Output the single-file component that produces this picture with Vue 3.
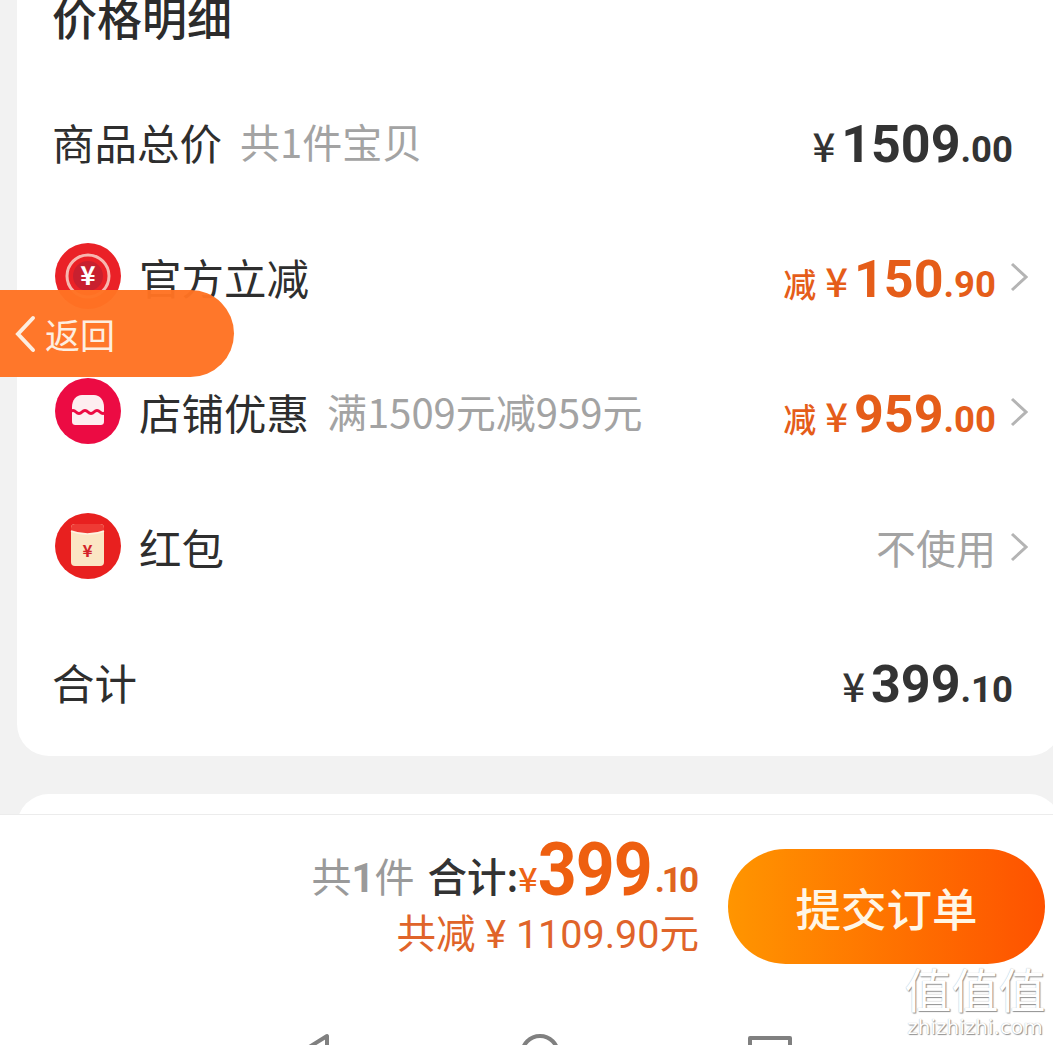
<script setup>
const rows = [
  { id: 'official', icon: 'coin', label: '官方立减', prefix: '减', big: '150', small: '.90' },
  { id: 'shop', icon: 'shop', label: '店铺优惠', note: '满1509元减959元', prefix: '减', big: '959', small: '.00' },
  { id: 'packet', icon: 'packet', label: '红包', plain: '不使用' }
]
</script>

<template>
  <div class="page">
    <div class="card">
      <div class="title">价格明细</div>
      <div class="row">
        <div class="left">
          <span class="label">商品总价</span>
          <span class="note">共1件宝贝</span>
        </div>
        <div class="price">
          <span class="yen">¥</span><span class="big">1509</span><span class="small">.00</span>
        </div>
      </div>

      <div v-for="row in rows" :key="row.id" class="row row-link">
        <div class="left">
          <svg v-if="row.icon === 'coin'" class="icon" viewBox="0 0 66 66">
            <circle cx="33" cy="33" r="33" fill="#ea2127" />
            <circle cx="33" cy="33" r="21" fill="none" stroke="#f7b7b0" stroke-width="3" />
            <circle cx="33" cy="33" r="15" fill="#c8202f" />
            <text x="33" y="42" class="icon-yen" font-size="26" fill="#fff">¥</text>
          </svg>
          <svg v-else-if="row.icon === 'shop'" class="icon" viewBox="0 0 66 66">
            <circle cx="33" cy="33" r="33" fill="#ec0b43" />
            <path d="M17 29c0-7 4-12 10-12h12c6 0 10 5 10 12v14c0 3-1 4-4 4H21c-3 0-4-1-4-4z" fill="#fdeef0" />
            <path d="M15 34q3-3 6 0t6 0 6 0 6 0 6 0 6 0" fill="none" stroke="#ec0b43" stroke-width="3" />
          </svg>
          <svg v-else class="icon" viewBox="0 0 66 66">
            <circle cx="33" cy="33" r="33" fill="#e8201f" />
            <rect x="16" y="11" width="33" height="42" rx="4" fill="#fbe6c4" />
            <path d="M16 15c0-3 2-4 4-4h25c2 0 4 1 4 4v3c-10 4-23 4-33 0z" fill="#ee3a34" />
            <path d="M16 18c10 4 23 4 33 0" fill="none" stroke="#fff3e2" stroke-width="1.500" />
            <text x="32.500" y="44" class="icon-yen" font-size="17" fill="#d3232a">¥</text>
          </svg>
          <span class="label">{{ row.label }}</span>
          <span v-if="row.note" class="note">{{ row.note }}</span>
        </div>
        <div class="right">
          <span v-if="row.plain" class="plain">{{ row.plain }}</span>
          <div v-else class="price orange">
            <span class="prefix">{{ row.prefix }}</span><span class="yen">¥</span><span class="big">{{ row.big }}</span><span class="small">{{ row.small }}</span>
          </div>
          <svg class="chevron" viewBox="0 0 18 30">
            <path d="M2 2l14 13L2 28" fill="none" stroke="#b4b4b4" stroke-width="3" />
          </svg>
        </div>
      </div>

      <div class="row">
        <div class="left"><span class="label">合计</span></div>
        <div class="price">
          <span class="yen">¥</span><span class="big">399</span><span class="small">.10</span>
        </div>
      </div>
    </div>

    <div class="next-card"></div>

    <div class="bar">
      <div class="summary">
        <div class="line-one">
          <span class="count">共<b>1</b>件</span>
          <span class="total">合计:</span>
          <span class="bar-yen">¥</span><span class="bar-big">399</span><span class="bar-small">.10</span>
        </div>
        <div class="line-two">共减 ¥ 1109.90元</div>
      </div>
      <button class="submit">提交订单</button>
    </div>

    <div class="nav">
      <svg width="33" height="13" viewBox="0 0 33 13"><path d="M-2 22L27 4V22" fill="none" stroke="#808080" stroke-width="4" stroke-linejoin="round" /></svg>
      <svg width="46" height="13" viewBox="0 0 46 13"><circle cx="23" cy="22" r="18" fill="none" stroke="#808080" stroke-width="4" /></svg>
      <svg width="46" height="13" viewBox="0 0 46 13"><path d="M3 22V6h40v16" fill="none" stroke="#808080" stroke-width="4" stroke-linejoin="round" /></svg>
    </div>

    <div class="back">
      <svg class="back-arrow" viewBox="0 0 24 38">
        <path d="M20 3L5 19l15 16" fill="none" stroke="#fdeee0" stroke-width="4" stroke-linecap="round" />
      </svg>
      <span>返回</span>
    </div>

    <div class="watermark">
      <div class="mark-glyph">值值值</div>
      <div class="mark-site">zhizhizhi.com</div>
    </div>
  </div>
</template>

<style>
html, body {
  margin: 0;
  background: #f2f2f2;
}
</style>

<style scoped>
.page {
  position: relative;
  width: 1053px;
  height: 1045px;
  overflow: hidden;
  background: #f2f2f2;
  font-family: "Liberation Sans", "Noto Sans CJK SC", sans-serif;
  color: #333;
}

.card {
  margin: 0 -8px 0 17px;
  padding: 0 33px 0 35px;
  height: 756px;
  box-sizing: border-box;
  background: #fff;
  border-radius: 0 0 32px 32px;
}

.title {
  height: 77px;
  font-family: "Noto Sans CJK SC", sans-serif;
  font-size: 45px;
  font-weight: 500;
  line-height: 34px;
  color: #2c2c2c;
}

.row {
  height: 135px;
  display: flex;
  align-items: center;
  justify-content: space-between;
  padding-right: 15px;
}

.row-link {
  padding-right: 0;
}

.left {
  display: flex;
  align-items: center;
  margin-top: -7px;
}

.right {
  display: flex;
  align-items: center;
}

.icon {
  width: 66px;
  height: 66px;
  margin: 0 18px 0 3px;
}

.icon-yen {
  font-family: "Noto Sans CJK SC", sans-serif;
  font-weight: 700;
  text-anchor: middle;
}

.label {
  font-family: "Noto Sans CJK SC", sans-serif;
  font-size: 42.500px;
  color: #2e2e2e;
}

.note {
  margin-left: 18px;
  font-family: "Noto Sans CJK SC", sans-serif;
  font-size: 40px;
  color: #a3a3a3;
}

.price {
  display: flex;
  align-items: baseline;
  font-family: Roboto, "Noto Sans CJK SC", sans-serif;
  font-weight: 700;
  color: #333;
}

.price .yen {
  font-family: "Noto Sans CJK SC", sans-serif;
  font-weight: 500;
  font-size: 40px;
  margin-right: 6px;
}

.big {
  font-size: 52px;
}

.small {
  font-size: 36.500px;
}

.orange {
  color: #e55d19;
  margin-right: 14px;
}

.prefix {
  font-family: "Noto Sans CJK SC", sans-serif;
  font-weight: 500;
  font-size: 33px;
  margin-right: 9px;
}

.plain {
  margin: -6px 14px 0 0;
  font-family: "Noto Sans CJK SC", sans-serif;
  font-size: 40px;
  color: #a3a3a3;
}

.chevron {
  width: 18px;
  height: 30px;
  margin-top: -6px;
}

.next-card {
  height: 60px;
  margin: 38px -8px -40px 17px;
  background: #fff;
  border-radius: 32px 32px 0 0;
}

.bar {
  position: relative;
  height: 200px;
  padding: 24px 8px 0 0;
  box-sizing: border-box;
  display: flex;
  justify-content: flex-end;
  gap: 29px;
  background: #fff;
  border-top: 1px solid #ececec;
}

.summary {
  display: flex;
  flex-direction: column;
  align-items: flex-end;
}

.line-one {
  display: flex;
  align-items: baseline;
  height: 62px;
  line-height: 56px;
  font-family: "Noto Sans CJK SC", sans-serif;
  margin-top: 2px;
}

.count {
  font-size: 40px;
  color: #9a9a9a;
}

.count b {
  font-family: Roboto, sans-serif;
}

.total {
  margin-left: 13px;
  font-size: 39.500px;
  font-weight: 500;
  color: #333;
}

.bar-yen {
  font-size: 34px;
  font-weight: 500;
  color: #ee6416;
}

.bar-big {
  font-family: Roboto, sans-serif;
  font-size: 68px;
  font-weight: 700;
  letter-spacing: -1px;
  color: #ee5f10;
  transform: translateY(3px) scaleY(1.08);
  transform-origin: 50% 80%;
}

.bar-small {
  margin-left: 3px;
  font-family: Roboto, sans-serif;
  font-size: 35px;
  font-weight: 700;
  letter-spacing: -3px;
  padding-right: 3px;
  color: #e0641f;
}

.line-two {
  margin-top: 10px;
  font-family: Roboto, "Noto Sans CJK SC", sans-serif;
  font-size: 39.500px;
  line-height: 44px;
  color: #e0642a;
}

.submit {
  width: 317px;
  height: 115px;
  margin-top: 10px;
  padding: 0;
  border: 0;
  border-radius: 58px;
  background: linear-gradient(90deg, #ff9500, #fe5200);
  color: #fff6e6;
  font-family: "Noto Sans CJK SC", sans-serif;
  font-size: 45.500px;
  font-weight: 500;
}

.nav {
  display: flex;
  gap: 184px;
  height: 31px;
  box-sizing: border-box;
  padding: 18px 0 0 300px;
  background: #fff;
}

.back {
  position: absolute;
  left: 0;
  top: 290px;
  width: 234px;
  height: 87px;
  box-sizing: border-box;
  padding-left: 13px;
  display: flex;
  align-items: center;
  gap: 8px;
  border-radius: 0 44px 44px 0;
  background: rgba(255, 115, 35, 0.97);
  color: #fdeee0;
  font-family: "Noto Sans CJK SC", sans-serif;
  font-size: 35px;
}

.back-arrow {
  width: 24px;
  height: 38px;
}

.watermark {
  position: absolute;
  left: 900px;
  top: 962px;
  width: 150px;
  text-align: center;
  color: #fff;
  text-shadow: 1px 1px 1px #8f8f8f, 0 0 1px #a8a8a8;
}

.mark-glyph {
  font-family: "Noto Sans CJK SC", sans-serif;
  font-size: 47px;
  line-height: 52px;
}

.mark-site {
  font-family: "DejaVu Sans", sans-serif;
  font-size: 20px;
  line-height: 22px;
  margin-top: 2px;
}
</style>
